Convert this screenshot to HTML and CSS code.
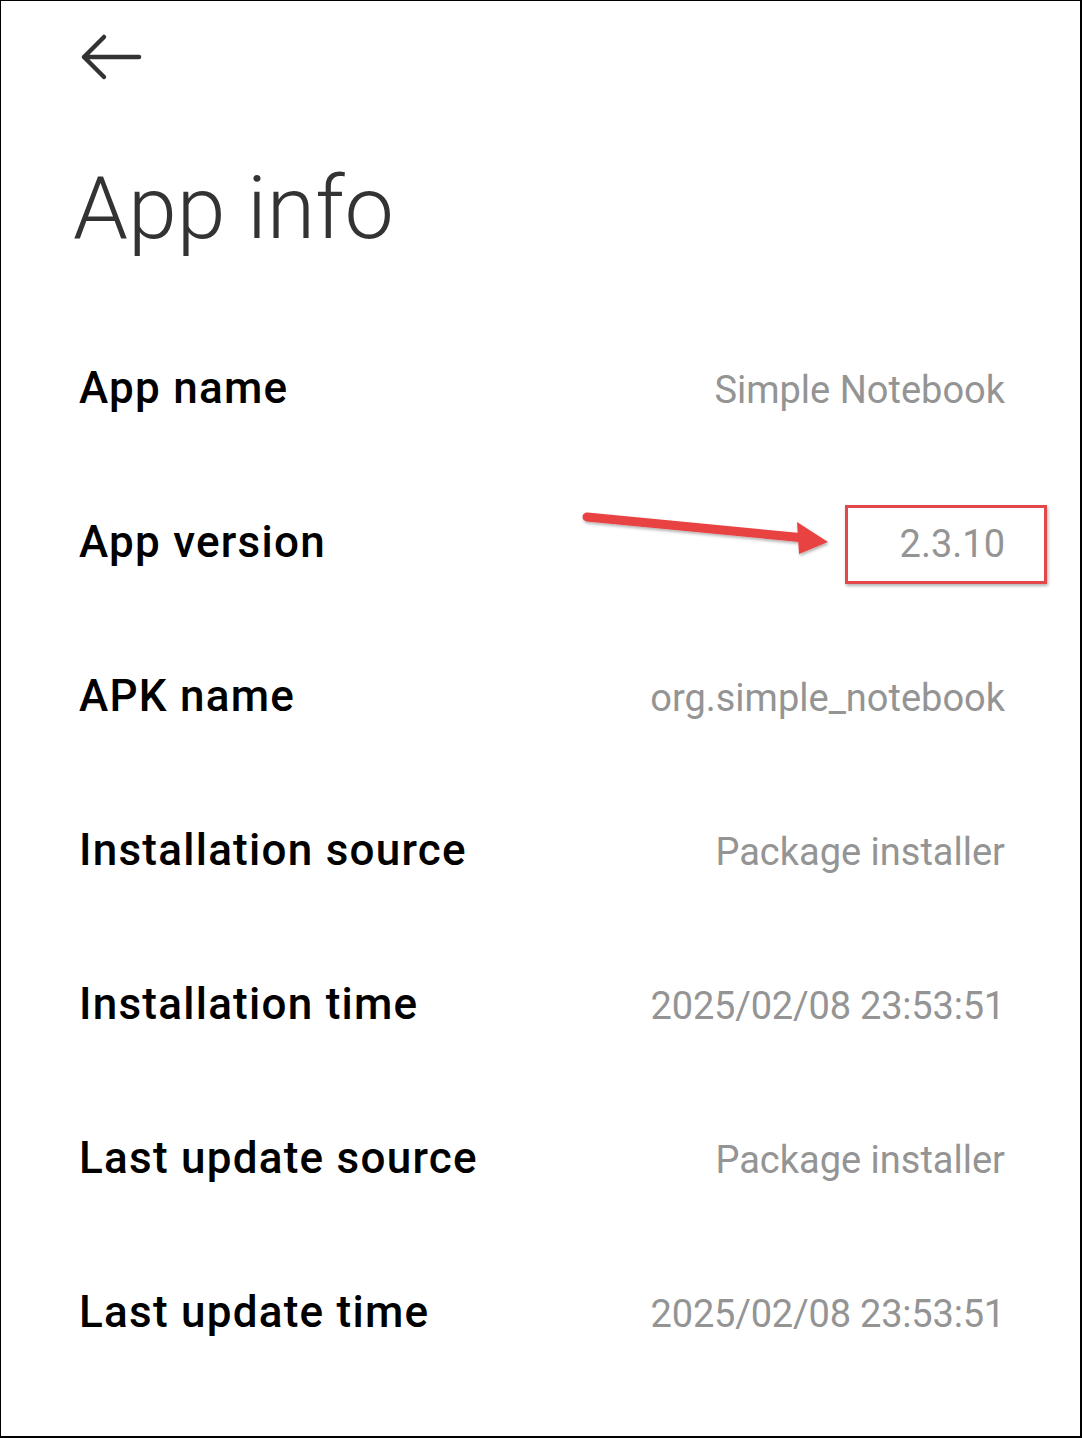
FILE: index.html
```html
<!DOCTYPE html>
<html>
<head>
<meta charset="utf-8">
<link rel="stylesheet" href="styles.css">
</head>
<body>
<div class="screen">
  <div class="header">
    <svg class="back" width="70" height="50" viewBox="0 0 70 50">
      <path d="M61 24 H6 M26 4 L6 24 L26 44" fill="none" stroke="#333" stroke-width="4.5" stroke-linecap="round" stroke-linejoin="round"/>
    </svg>
  </div>
  <h1 class="title">App info</h1>
  <div class="list">
    <div class="row"><span class="label">App name</span><span class="value">Simple Notebook</span></div>
    <div class="row"><span class="label">App version</span><span class="value">2.3.10</span></div>
    <div class="row"><span class="label">APK name</span><span class="value">org.simple_notebook</span></div>
    <div class="row"><span class="label">Installation source</span><span class="value">Package installer</span></div>
    <div class="row"><span class="label">Installation time</span><span class="value num">2025/02/08 23:53:51</span></div>
    <div class="row"><span class="label">Last update source</span><span class="value">Package installer</span></div>
    <div class="row"><span class="label">Last update time</span><span class="value num">2025/02/08 23:53:51</span></div>
  </div>
  <div class="highlight-box"></div>
  <svg class="pointer" width="1082" height="1438" viewBox="0 0 1082 1438">
    <defs>
      <filter id="sh" x="-10%" y="-50%" width="120%" height="200%">
        <feDropShadow dx="1" dy="2" stdDeviation="1.5" flood-color="#000" flood-opacity="0.3"/>
      </filter>
    </defs>
    <g filter="url(#sh)">
      <line x1="587" y1="517" x2="805" y2="538" stroke="#e94242" stroke-width="9" stroke-linecap="round"/>
      <polygon points="797,522 828,542 799,554" fill="#e94242"/>
    </g>
  </svg>
</div>
</body>
</html>
```

FILE: styles.css
```css
html, body {
  margin: 0;
  padding: 0;
  background: #fff;
}
.screen {
  position: relative;
  width: 1082px;
  height: 1438px;
  box-sizing: border-box;
  border-top: 1px solid #000;
  border-left: 1px solid #000;
  border-right: 2px solid #000;
  border-bottom: 2px solid #000;
  overflow: hidden;
  font-family: Roboto, "Liberation Sans", sans-serif;
}
.header {
  height: 163px;
  padding-left: 77px;
  padding-top: 32px;
  box-sizing: border-box;
}
.back {
  display: block;
}
.title {
  margin: 0;
  padding-left: 72px;
  font-size: 88px;
  font-weight: 300;
  line-height: 88px;
  color: #333;
}
.list {
  margin-top: 59px;
  padding-left: 78px;
  padding-right: 75px;
}
.row {
  display: flex;
  justify-content: space-between;
  align-items: baseline;
  height: 154px;
}
.label {
  font-size: 44px;
  font-weight: 500;
  letter-spacing: 1.25px;
  line-height: 154px;
  color: #000;
}
.value {
  font-size: 38px;
  font-weight: 400;
  line-height: 1;
  color: #949494;
}
.value.num {
  letter-spacing: -0.2px;
}
.highlight-box {
  position: absolute;
  left: 844px;
  top: 504px;
  width: 202px;
  height: 79px;
  box-sizing: border-box;
  border: 3px solid #e2474a;
  box-shadow: 1px 2px 3px rgba(0,0,0,0.3);
}
.pointer {
  position: absolute;
  left: -1px;
  top: -1px;
  pointer-events: none;
}
```
